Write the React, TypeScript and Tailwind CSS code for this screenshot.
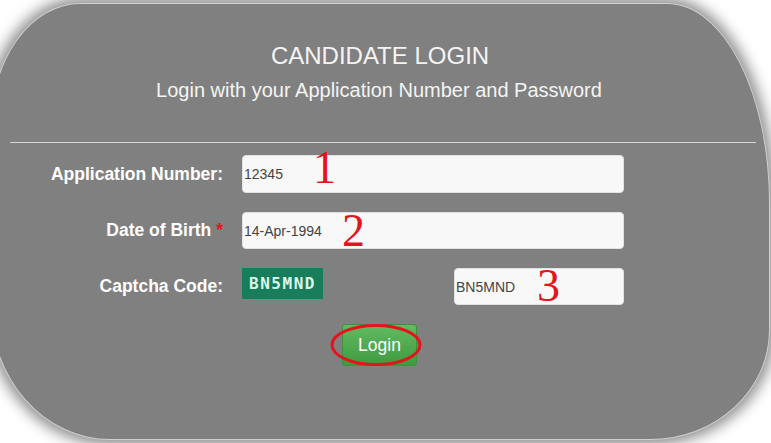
export default function App() {
  return (
    <div className="w-[771px] h-[443px] overflow-hidden bg-white font-['Liberation_Sans',Arial,sans-serif]">
      <div className="ml-[-10px] mt-[3px] w-[780px] h-[437px] bg-[#808080] border border-[#cfcfcf] rounded-[90px_103px_120px_120px/126px_200px_110px_135px] shadow-[0_0_14px_5px_rgba(0,0,0,0.45)] flex flex-col">
        <div className="pt-[38px] text-center text-[#f4f4f4]">
          <h1 className="text-[24px] leading-[28px]">CANDIDATE LOGIN</h1>
          <p className="mt-2 text-[20px] leading-[24px] ml-[-2px]">Login with your Application Number and Password</p>
        </div>

        <div className="mt-[40px] ml-[19px] w-[746px] h-px bg-[#d6d6d6]" />

        <div className="mt-[12px] flex flex-col gap-[19px]">
          <div className="flex items-center gap-[19px]">
            <label className="w-[232px] text-right text-[17.5px] font-bold text-white">Application Number:</label>
            <div className="relative">
              <input
                readOnly
                value="12345"
                className="w-[382px] h-[38px] pl-[1px] rounded-[4px] bg-[#f8f8f8] border border-[#e2e2e2] text-[14px] text-[#444] outline-none"
              />
              <span className="absolute left-[71px] top-[-10px] text-[46px] leading-none text-[#e3141b] font-['Liberation_Serif',serif] pointer-events-none">1</span>
            </div>
          </div>

          <div className="flex items-center gap-[19px]">
            <label className="w-[232px] text-right text-[17.5px] font-bold text-white">
              Date of Birth <span className="text-[#e3141b]">*</span>
            </label>
            <div className="relative">
              <input
                readOnly
                value="14-Apr-1994"
                className="w-[382px] h-[37px] pl-[1px] rounded-[4px] bg-[#f8f8f8] border border-[#e2e2e2] text-[14px] text-[#444] outline-none"
              />
              <span className="absolute left-[100px] top-[-4px] text-[46px] leading-none text-[#e3141b] font-['Liberation_Serif',serif] pointer-events-none">2</span>
            </div>
          </div>

          <div className="flex items-center gap-[19px]">
            <label className="w-[232px] text-right text-[17.5px] font-bold text-white">Captcha Code:</label>
            <div className="w-[382px] flex items-start justify-between">
              <div className="w-[81px] h-[31px] bg-[#177d5b] flex items-center justify-center text-[16px] font-bold tracking-[1.5px] text-[#dcf7ea] font-['DejaVu_Sans_Mono',monospace]">
                BN5MND
              </div>
              <div className="relative">
                <input
                  readOnly
                  value="BN5MND"
                  className="w-[170px] h-[37px] pl-[1px] rounded-[4px] bg-[#f8f8f8] border border-[#e2e2e2] text-[14px] text-[#444] outline-none"
                />
                <span className="absolute left-[83px] top-[-5px] text-[46px] leading-none text-[#e3141b] font-['Liberation_Serif',serif] pointer-events-none">3</span>
              </div>
            </div>
          </div>

          <div className="flex">
            <div className="relative ml-[351px]">
              <button className="w-[75px] h-[42px] rounded-[3px] border border-[#3f8f3f] bg-gradient-to-b from-[#62bb62] to-[#3f9a3f] text-[17.5px] text-white">
                Login
              </button>
              <svg className="absolute left-[-12px] top-[-2px] pointer-events-none" width="96" height="44" viewBox="0 0 96 44">
                <ellipse cx="46" cy="23" rx="44" ry="19.5" fill="none" stroke="#e3141b" strokeWidth="3" />
              </svg>
            </div>
          </div>
        </div>
      </div>
    </div>
  )
}
